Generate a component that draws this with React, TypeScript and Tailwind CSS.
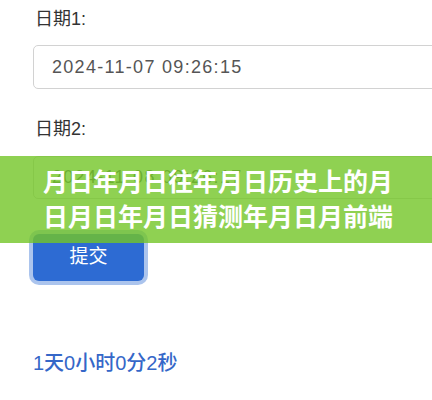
export default function App() {
  return (
    <div className="relative h-[400px] w-[432px] overflow-hidden bg-white font-['Liberation_Sans','Noto_Sans_CJK_SC',sans-serif]">
      <div className="flex flex-col items-start pl-[33px] pt-[8px]">
        <label className="pl-[2px] text-[18px] leading-[22px] text-[#333]">日期1:</label>
        <div className="mt-[15px] flex h-[44px] w-[420px] items-center rounded-[5px] border border-[#d2d2d2] pl-[18px] text-[18px] tracking-[1.3px] text-[#555]">
          2024-11-07 09:26:15
        </div>

        <label className="mt-[29px] pl-[2px] text-[18px] leading-[22px] text-[#333]">日期2:</label>
        <div className="mt-[16px] flex h-[43px] w-[420px] items-center rounded-[5px] border border-[#d2d2d2] pl-[18px] text-[18px] tracking-[1.3px] text-[#555]">
          2024-11-08 09:26:17
        </div>

        <button className="mt-[35px] h-[47px] w-[111px] rounded-[6px] bg-[#2d6bd3] text-[19px] text-white ring-4 ring-[#2d6bd3]/40">
          提交
        </button>

        <p className="mt-[71px] text-[20px] font-medium leading-[22px] text-[#3567c8]">1天0小时0分2秒</p>
      </div>

      <div className="absolute left-0 top-[156px] flex h-[87px] w-full flex-col justify-center bg-[rgba(115,198,39,0.8)] pl-[43px] text-[25px] font-bold leading-[35px] text-white">
        <span>月日年月日往年月日历史上的月</span>
        <span>日月日年月日猜测年月日月前端</span>
      </div>
    </div>
  );
}
